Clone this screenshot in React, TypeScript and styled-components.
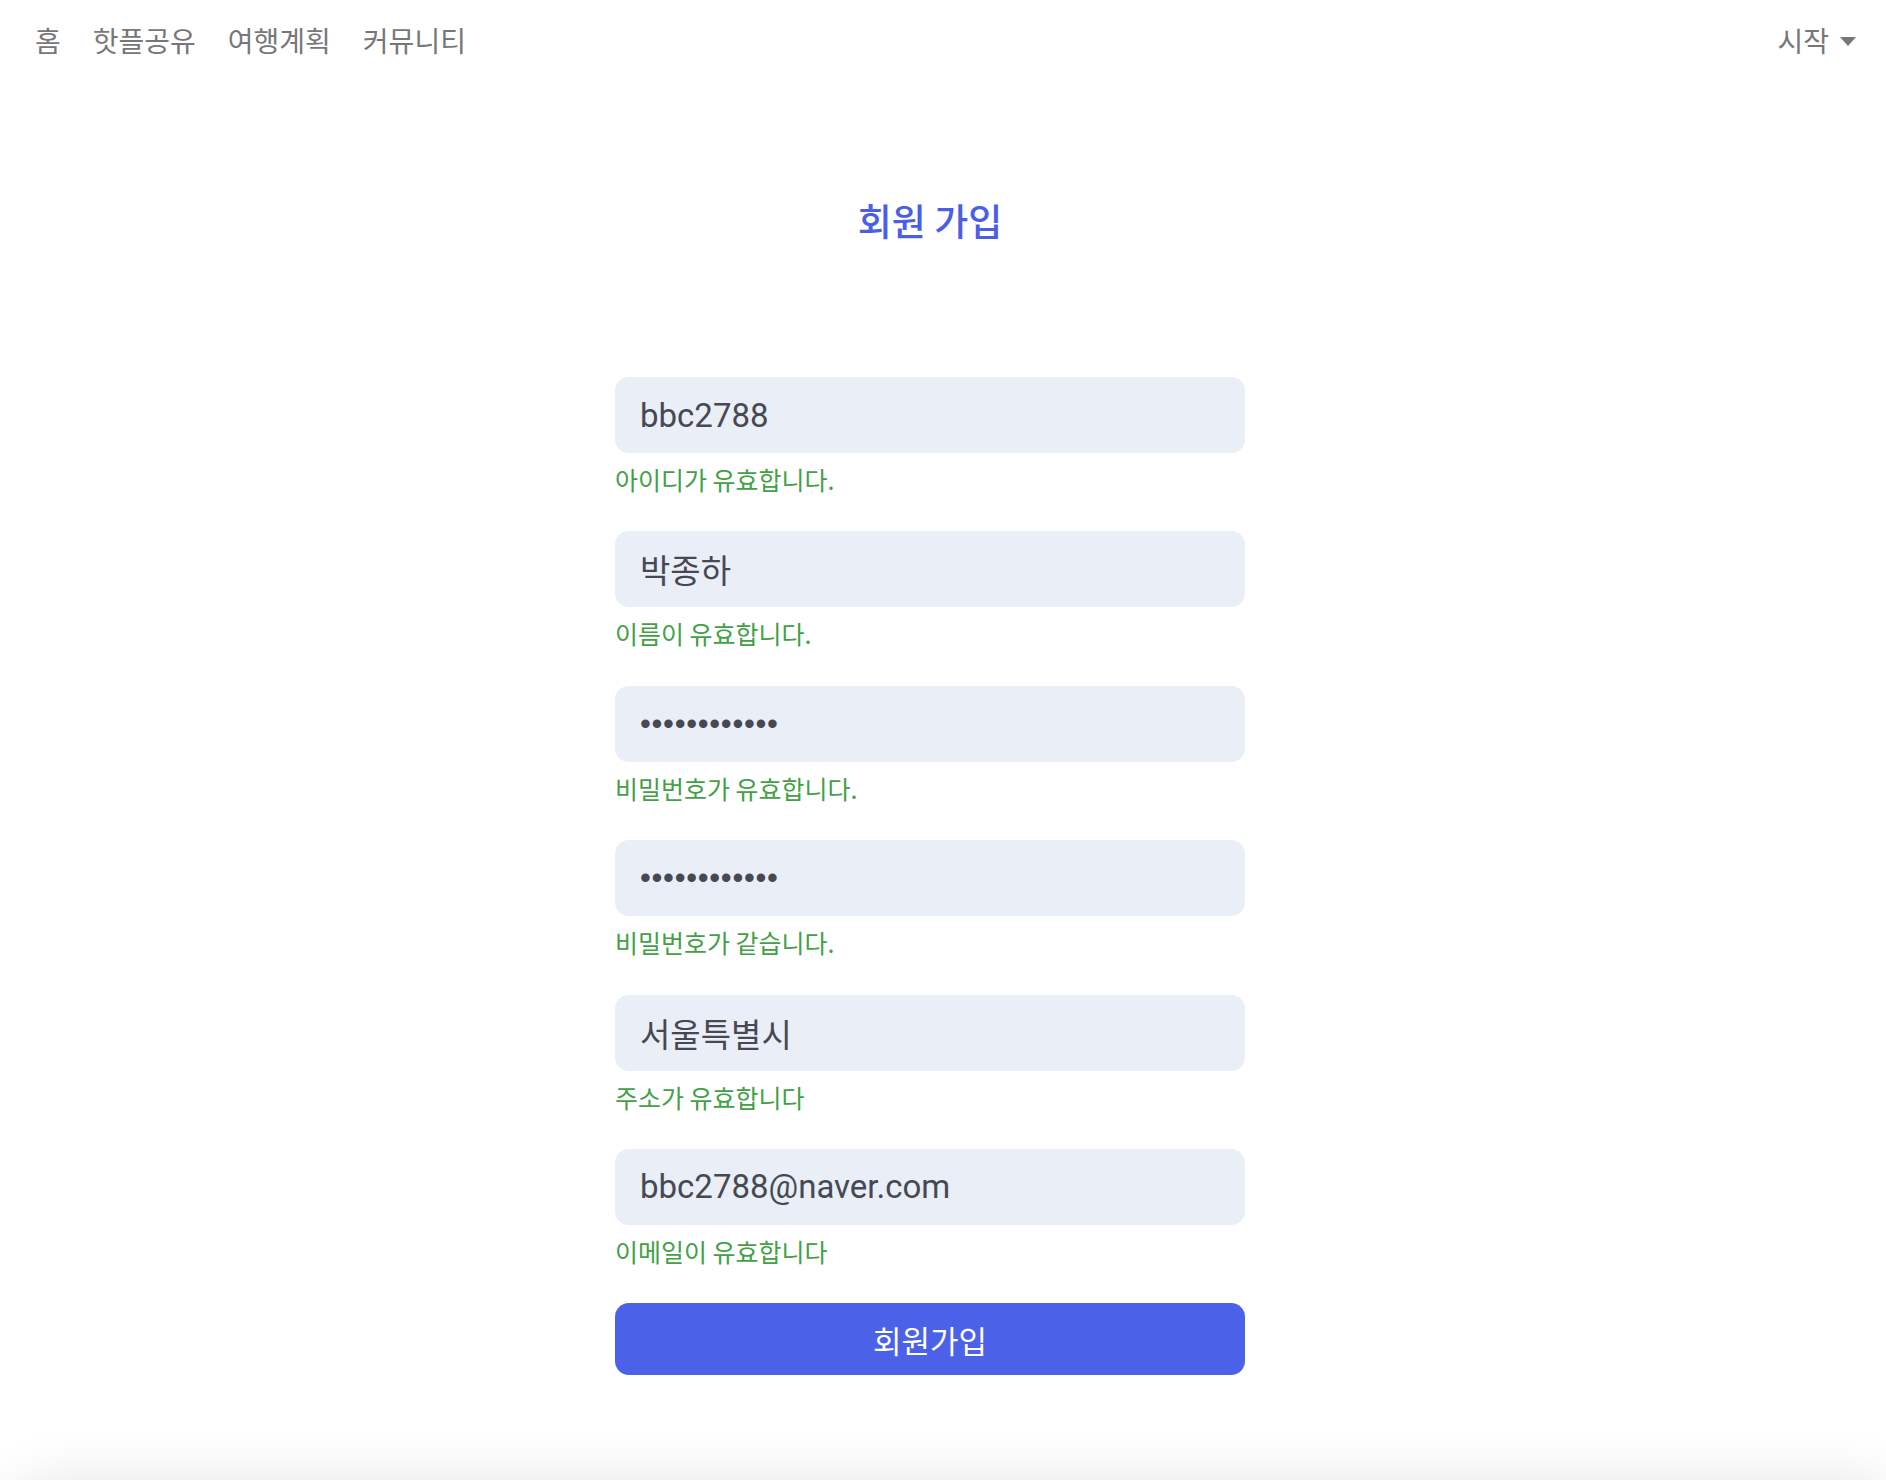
import React from 'react';
import styled, { createGlobalStyle } from 'styled-components';

const GlobalStyle = createGlobalStyle`
  html, body {
    margin: 0;
    padding: 0;
    background: #fff;
    font-family: "Noto Sans CJK KR", "Noto Sans", sans-serif;
  }
  * {
    box-sizing: border-box;
  }
`;

const Page = styled.div`
  height: 1480px;
  display: flex;
  flex-direction: column;
  overflow: hidden;
`;

const Header = styled.header`
  height: 80px;
  display: flex;
  align-items: center;
  justify-content: space-between;
  padding: 0 30px 0 35px;
`;

const Nav = styled.nav`
  display: flex;
  align-items: center;
  gap: 32px;
`;

const NavLink = styled.a`
  font-size: 28px;
  line-height: 38px;
  color: #777;
  text-decoration: none;
  cursor: pointer;
`;

const StartMenu = styled.div`
  display: flex;
  align-items: center;
  gap: 11px;
  font-size: 28px;
  line-height: 38px;
  color: #777;
  cursor: pointer;
`;

const Caret = styled.span`
  width: 0;
  height: 0;
  border-left: 8px solid transparent;
  border-right: 8px solid transparent;
  border-top: 9px solid #777;
  margin-top: 2px;
`;

const Main = styled.main`
  flex: 1;
  display: flex;
  flex-direction: column;
  align-items: center;
  padding-right: 26px;
`;

const Title = styled.h1`
  margin: 115px 0 132px;
  font-size: 37px;
  line-height: 50px;
  font-weight: 500;
  color: #4a5ee6;
`;

const Form = styled.form`
  width: 630px;
  display: flex;
  flex-direction: column;
`;

const Field = styled.div`
  display: flex;
  flex-direction: column;
  margin-bottom: 34.4px;
`;

const Input = styled.input<{ $secret?: boolean }>`
  height: 76px;
  width: 100%;
  border: none;
  outline: none;
  border-radius: 14px;
  background: #eaeef6;
  padding: 0 25px;
  font-family: ${(p) => (p.$secret ? '"Liberation Sans", sans-serif' : 'Roboto, "Noto Sans CJK KR", sans-serif')};
  font-size: ${(p) => (p.$secret ? '31px' : '33px')};
  letter-spacing: ${(p) => (p.$secret ? '0.7px' : '0')};
  color: #464953;
`;

const Message = styled.div`
  margin-top: 8px;
  font-size: 25px;
  line-height: 36px;
  color: #43a047;
`;

const SubmitButton = styled.button`
  height: 72px;
  width: 100%;
  border: none;
  border-radius: 14px;
  background: #4a61e8;
  color: #fff;
  font-family: "Noto Sans CJK KR", sans-serif;
  font-size: 31px;
  cursor: pointer;
`;

const Footer = styled.footer`
  flex: none;
  height: 200px;
  margin-bottom: -205px;
  border-radius: 60px 0 0 0;
  background: #fff;
  box-shadow: 0 0 60px rgba(0, 0, 0, 0.12);
`;

const fields = [
  { type: 'text', value: 'bbc2788', msg: '아이디가 유효합니다.' },
  { type: 'text', value: '박종하', msg: '이름이 유효합니다.' },
  { type: 'password', value: 'abcdefghijkl', msg: '비밀번호가 유효합니다.' },
  { type: 'password', value: 'abcdefghijkl', msg: '비밀번호가 같습니다.' },
  { type: 'text', value: '서울특별시', msg: '주소가 유효합니다' },
  { type: 'text', value: 'bbc2788@naver.com', msg: '이메일이 유효합니다' },
];

const App = () => {
  return (
    <>
      <GlobalStyle />
      <Page>
        <Header>
          <Nav>
            <NavLink>홈</NavLink>
            <NavLink>핫플공유</NavLink>
            <NavLink>여행계획</NavLink>
            <NavLink>커뮤니티</NavLink>
          </Nav>
          <StartMenu>
            시작
            <Caret />
          </StartMenu>
        </Header>
        <Main>
          <Title>회원 가입</Title>
          <Form onSubmit={(e) => e.preventDefault()}>
            {fields.map((f, i) => (
              <Field key={i}>
                <Input type={f.type} $secret={f.type === 'password'} defaultValue={f.value} />
                <Message>{f.msg}</Message>
              </Field>
            ))}
            <SubmitButton type="submit">회원가입</SubmitButton>
          </Form>
        </Main>
        <Footer />
      </Page>
    </>
  );
};

export default App;
